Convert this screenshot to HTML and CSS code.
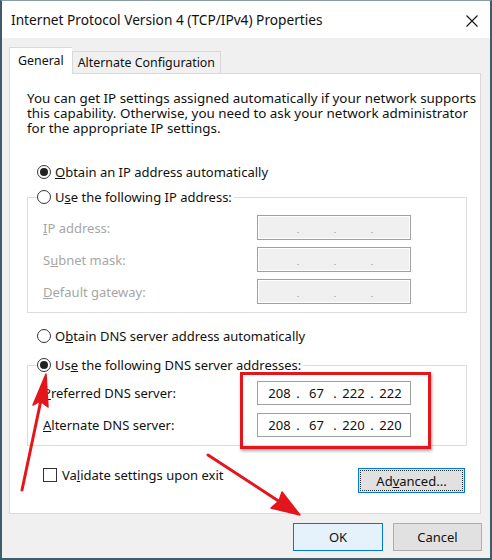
FILE: index.html
```html
<!DOCTYPE html>
<html lang="en">
<head>
    <meta charset="UTF-8">
    <title>Internet Protocol Version 4 (TCP/IPv4) Properties</title>
    <link rel="stylesheet" href="styles.css">
</head>
<body>

    <div class="window">
        <div class="titlebar">
            <span class="title">Internet Protocol Version 4 (TCP/IPv4) Properties</span>
            <svg class="close" width="12" height="12" viewBox="0 0 12 12">
                <path d="M0.5 0.5L11.5 11.5M11.5 0.5L0.5 11.5" stroke="#111" stroke-width="1.1" fill="none"/>
            </svg>
        </div>

        <div class="body">
            <div class="tabs">
                <div class="tab active">General</div>
                <div class="tab">Alternate Configuration</div>
            </div>

            <div class="panel">
                <p class="desc">You can get IP settings assigned automatically if your network supports<br>this capability. Otherwise, you need to ask your network administrator<br>for the appropriate IP settings.</p>

                <div class="option first">
                    <span class="radio checked"></span>
                    <span><u>O</u>btain an IP address automatically</span>
                </div>

                <fieldset class="group ip-group">
                    <legend class="option">
                        <span class="radio"></span>
                        <span>U<u>s</u>e the following IP address:</span>
                    </legend>
                    <div class="row disabled">
                        <span><u>I</u>P address:</span>
                        <div class="ipbox"><span></span><i>.</i><span></span><i>.</i><span></span><i>.</i><span></span></div>
                    </div>
                    <div class="row disabled">
                        <span>S<u>u</u>bnet mask:</span>
                        <div class="ipbox"><span></span><i>.</i><span></span><i>.</i><span></span><i>.</i><span></span></div>
                    </div>
                    <div class="row disabled">
                        <span><u>D</u>efault gateway:</span>
                        <div class="ipbox"><span></span><i>.</i><span></span><i>.</i><span></span><i>.</i><span></span></div>
                    </div>
                </fieldset>

                <div class="option dns-auto">
                    <span class="radio"></span>
                    <span>O<u>b</u>tain DNS server address automatically</span>
                </div>

                <fieldset class="group dns-group">
                    <legend class="option">
                        <span class="radio checked"></span>
                        <span>Us<u>e</u> the following DNS server addresses:</span>
                    </legend>
                    <div class="row">
                        <span><u>P</u>referred DNS server:</span>
                        <div class="ipbox filled"><span>208</span><i>.</i><span>67</span><i>.</i><span>222</span><i>.</i><span>222</span></div>
                    </div>
                    <div class="row">
                        <span><u>A</u>lternate DNS server:</span>
                        <div class="ipbox filled"><span>208</span><i>.</i><span>67</span><i>.</i><span>220</span><i>.</i><span>220</span></div>
                    </div>
                </fieldset>

                <div class="panel-bottom">
                    <label class="check">
                        <span class="box"></span>
                        <span>Va<u>l</u>idate settings upon exit</span>
                    </label>
                    <button class="btn advanced">Ad<u>v</u>anced...</button>
                </div>
            </div>

            <div class="footer">
                <button class="btn ok">OK</button>
                <button class="btn">Cancel</button>
            </div>
        </div>

        <!-- annotation drawn over the dialog -->
        <div class="callout"></div>
        <svg class="arrows" width="492" height="560" viewBox="0 0 492 560">
            <g stroke="#e3161c" stroke-width="3" stroke-linecap="round" fill="#e3161c">
                <line x1="22" y1="490" x2="41" y2="400"/>
                <polygon points="46,374 33,405 40,401 48,407" stroke-width="1.5" stroke-linejoin="round"/>
                <line x1="208" y1="455" x2="280" y2="502"/>
                <polygon points="300,515 271,508 279,501 282,492" stroke-width="1.5" stroke-linejoin="round"/>
            </g>
        </svg>
    </div>

</body>
</html>
```

FILE: styles.css
```css
* {
    box-sizing: border-box;
}

body {
    margin: 0;
    font-family: "Noto Sans", sans-serif;
    font-size: 13px;
    color: #111;
}

.window {
    position: relative;
    width: 492px;
    height: 560px;
    background: #f0f0f0;
    border: 2px solid #3f5d68;
    border-top: 1px solid #8a9ca3;
    display: flex;
    flex-direction: column;
}

.titlebar {
    height: 37px;
    background: #fff;
    display: flex;
    align-items: center;
    justify-content: space-between;
    padding: 0 12px 0 9px;
}

.title {
    font-size: 13.7px;
}

.close {
    margin-top: 2px;
}

.body {
    padding: 8px 9px 0 7px;
    flex: 1;
}

.tabs {
    display: flex;
    align-items: flex-end;
    height: 27px;
    position: relative;
    z-index: 1;
    font-size: 12.4px;
}

.tab {
    height: 22px;
    padding: 0 5px;
    border: 1px solid #d9d9d9;
    border-bottom: none;
    background: #f0f0f0;
    line-height: 21px;
}

.tab.active {
    height: 27px;
    background: #fff;
    padding: 0 8px 0 8px;
    line-height: 25px;
    margin-bottom: -1px;
    border-right: none;
}

.panel {
    height: 441px;
    background: #fff;
    border: 1px solid #d9d9d9;
    padding: 17px 13px 0 17px;
}

.desc {
    margin: 0;
    font-size: 13.4px;
    line-height: 15px;
    white-space: nowrap;
}

.option {
    display: flex;
    align-items: center;
    gap: 4px;
    height: 18px;
    white-space: nowrap;
}

.option.first {
    margin: 27px 0 0 10px;
}

.radio {
    width: 14px;
    height: 14px;
    border: 1px solid #333;
    border-radius: 50%;
    display: flex;
    align-items: center;
    justify-content: center;
    background: #fff;
}

.radio.checked::after {
    content: "";
    width: 8px;
    height: 8px;
    border-radius: 50%;
    background: #222;
}

.group {
    margin: 7px 0 0;
    padding: 0 0 8px 15px;
    border: 1px solid #dcdcdc;
    min-width: 0;
}

.group legend {
    padding: 0 2px 0 0;
    margin-left: -6px;
}

.ip-group .row:first-of-type {
    margin-top: 9px;
}

.dns-group {
    margin-top: 11px;
}

.dns-group .row:first-of-type {
    margin-top: 7px;
}

.row {
    display: grid;
    grid-template-columns: 214px 154px;
    align-items: center;
    margin-top: 7px;
}

.dns-group .row {
    margin-top: 8px;
}

.row.disabled {
    color: #a6a6a6;
}

.ipbox {
    height: 25px;
    border: 1px solid #a0a0a0;
    background: #fff;
    display: flex;
    align-items: center;
    padding-left: 5px;
}

.dns-group .ipbox {
    height: 24px;
}

.row.disabled .ipbox {
    background: #f0f0f0;
    box-shadow: inset 0 0 0 1px #fff;
}

.ipbox span {
    width: 33px;
    text-align: center;
}

.ipbox i {
    font-style: normal;
    width: 4px;
    text-align: center;
    font-size: 9px;
    color: #888;
    padding-top: 3px;
}

.ipbox.filled i {
    font-size: 13px;
    color: #111;
    padding-top: 0;
}

.option.dns-auto {
    margin: 14px 0 0 10px;
}

.panel-bottom {
    display: flex;
    justify-content: space-between;
    align-items: flex-start;
    margin: 22px 2px 0 16px;
}

.check {
    display: flex;
    align-items: center;
    gap: 5px;
    height: 14px;
}

.box {
    width: 14px;
    height: 14px;
    border: 1px solid #333;
    background: #fff;
}

.btn {
    font-family: inherit;
    font-size: 13px;
    color: #111;
    background: #e1e1e1;
    border: 1px solid #adadad;
    padding: 0;
}

.advanced {
    width: 107px;
    height: 25px;
    border-color: #0078d7;
    outline: 1px dotted #333;
    outline-offset: -3px;
}

.footer {
    display: flex;
    justify-content: flex-end;
    gap: 10px;
    margin: 9px -1px 0 0;
}

.footer .btn {
    width: 89px;
    height: 28px;
}

.footer .ok {
    width: 90px;
    background: #e5f1fb;
    border-color: #0078d7;
}

.callout {
    position: absolute;
    left: 238px;
    top: 371px;
    width: 191px;
    height: 77px;
    border: 3px solid #e3161c;
    box-shadow: 1px 2px 3px rgba(0, 0, 0, 0.35);
}

.arrows {
    position: absolute;
    left: -2px;
    top: -1px;
    pointer-events: none;
}
```
